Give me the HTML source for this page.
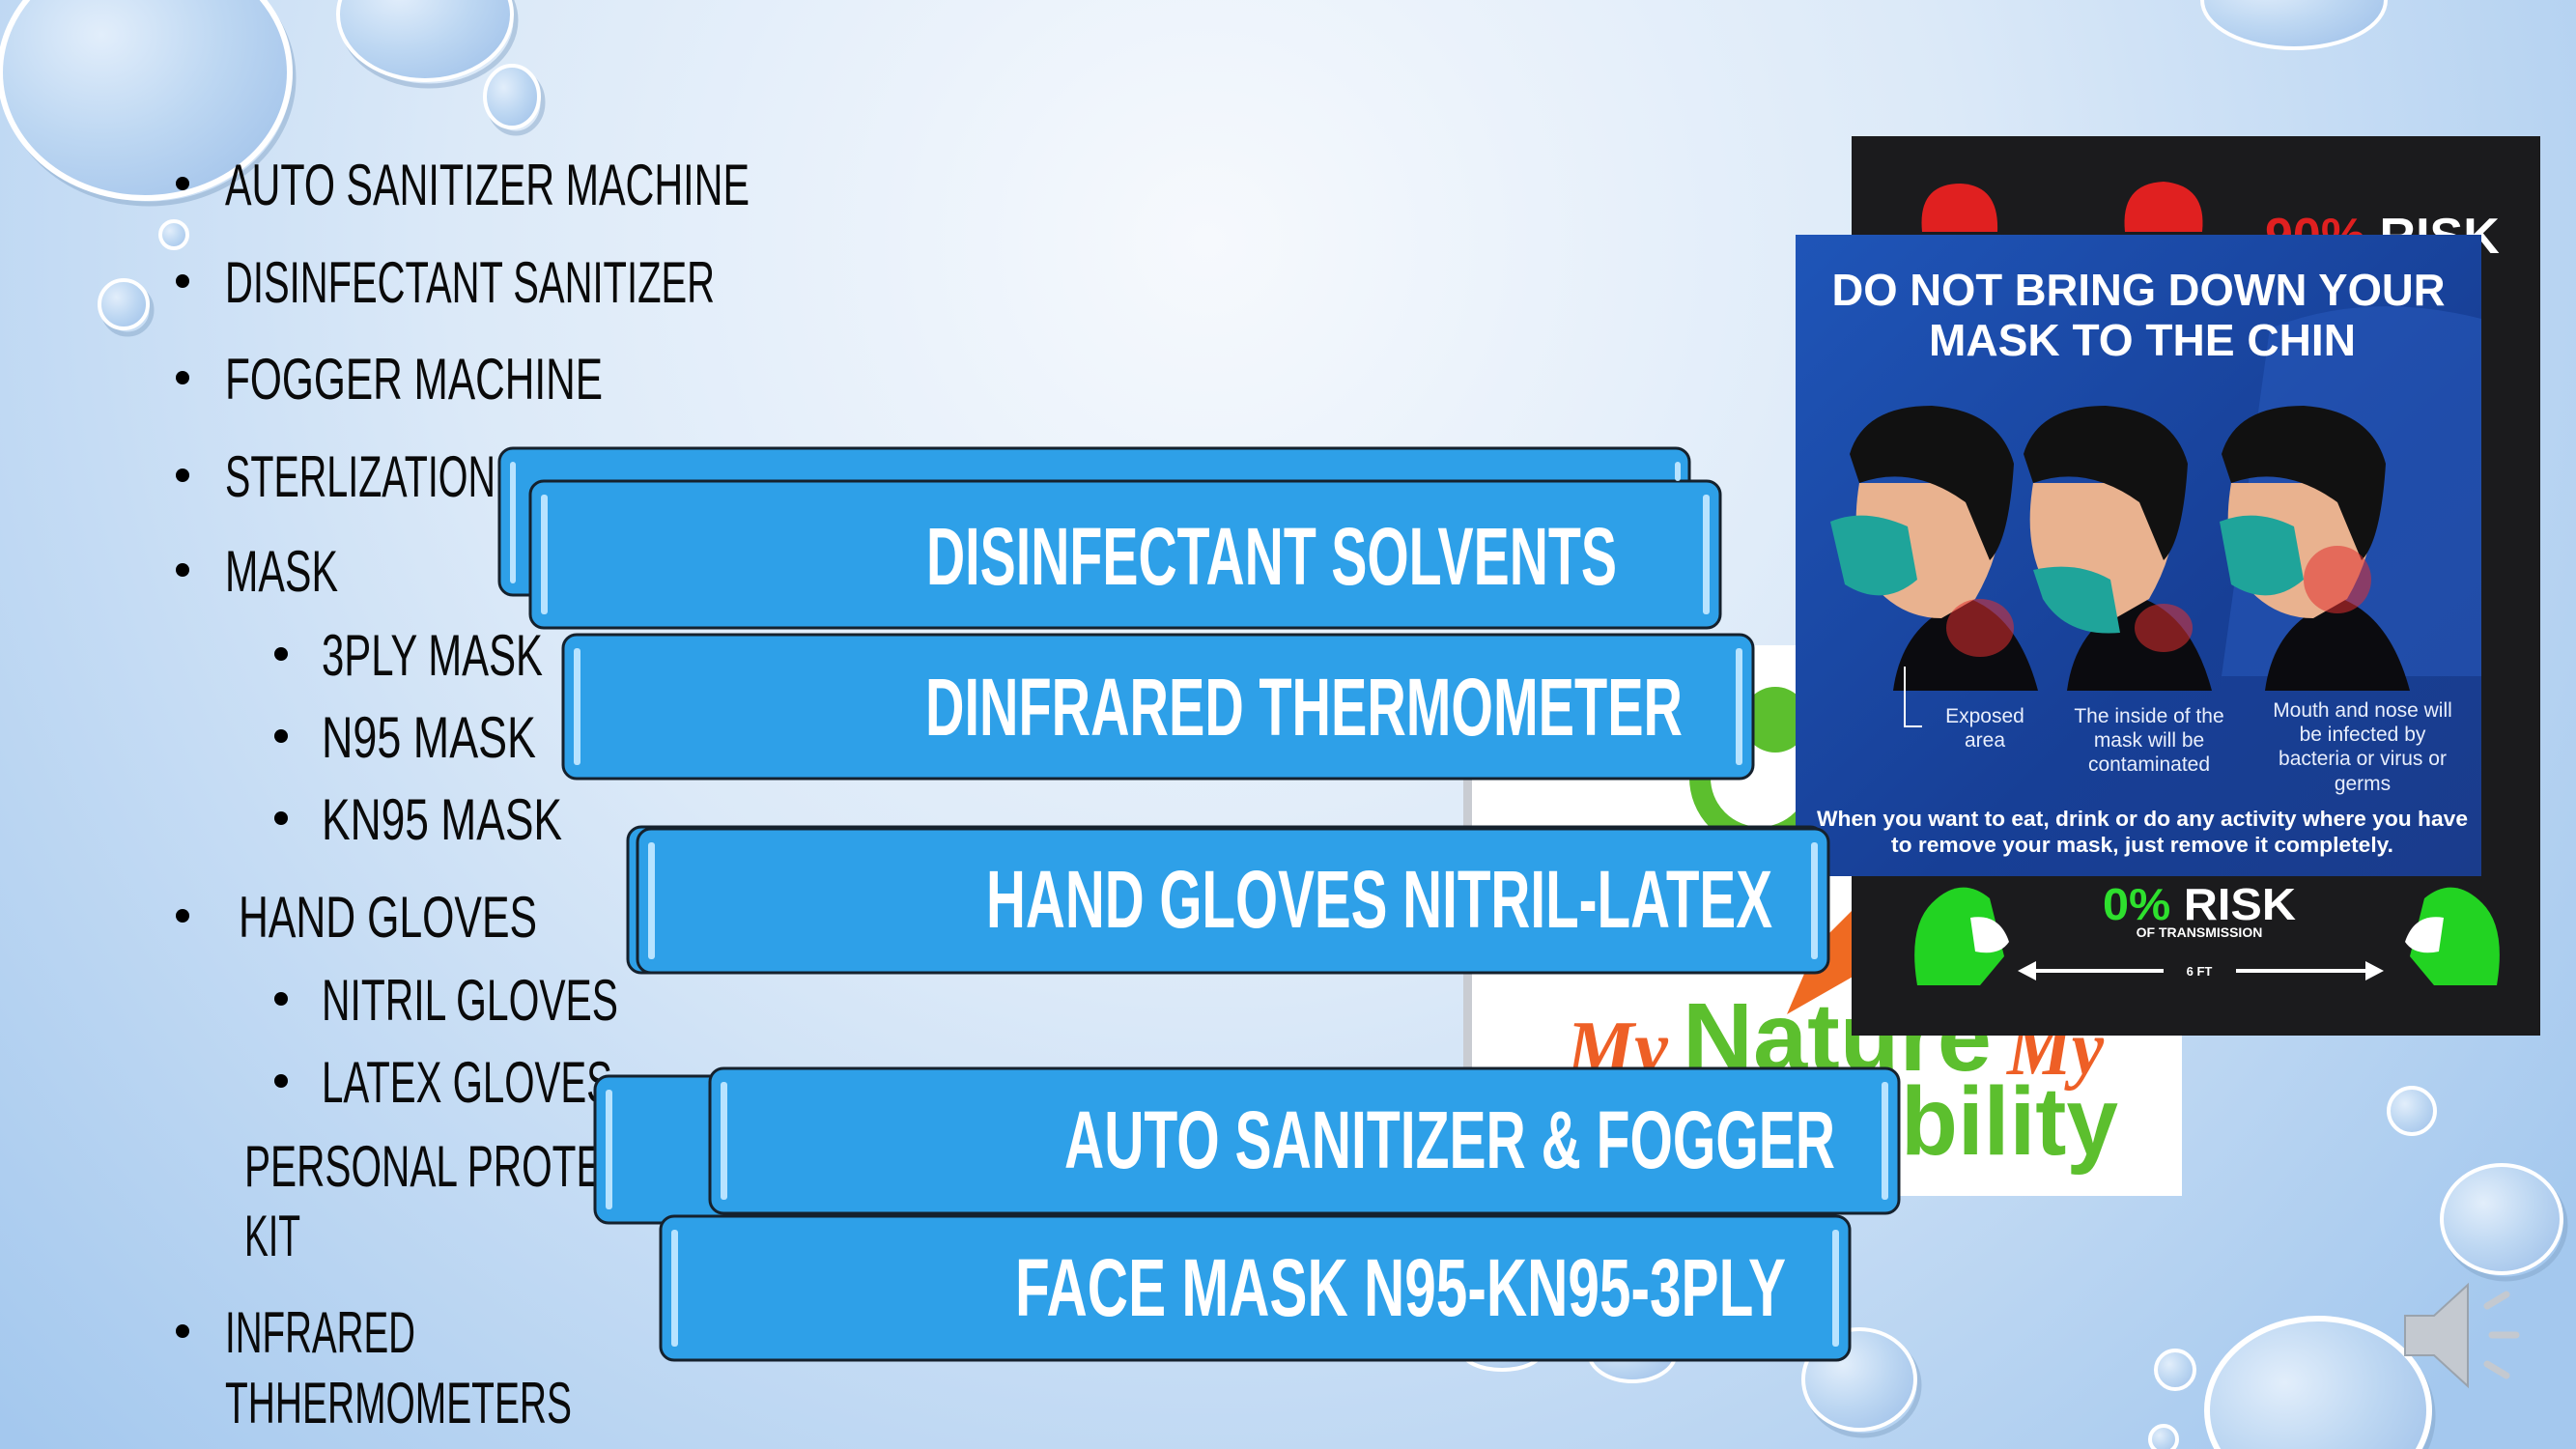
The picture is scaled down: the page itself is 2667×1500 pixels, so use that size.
<!DOCTYPE html>
<html><head><meta charset="utf-8"><style>
html,body{margin:0;padding:0;width:2667px;height:1500px;overflow:hidden}
svg{display:block}
.lt{font-family:"Liberation Sans",sans-serif;font-size:60px;fill:#0a0a0a}
.bt{font-family:"Liberation Sans",sans-serif;font-weight:bold;font-size:84px;fill:#fff}
.pt{font-family:"Liberation Sans",sans-serif;font-weight:bold;fill:#fff}
.cap{font-family:"Liberation Sans",sans-serif;font-size:21px;fill:#e8eefc;text-anchor:middle}
</style></head><body>
<svg width="2667" height="1500" viewBox="0 0 2667 1500" xmlns="http://www.w3.org/2000/svg">
<defs>
<radialGradient id="bg" cx="1250" cy="250" r="1750" gradientUnits="userSpaceOnUse">
<stop offset="0" stop-color="#f6f9fd"/><stop offset="0.45" stop-color="#dbe9f8"/><stop offset="1" stop-color="#a4c8ee"/>
</radialGradient>
<radialGradient id="drop" cx="0.35" cy="0.35" r="0.7">
<stop offset="0" stop-color="#e2eefb"/><stop offset="0.6" stop-color="#bdd7f2"/><stop offset="1" stop-color="#a9c8ec"/>
</radialGradient>
<linearGradient id="blue" x1="0" y1="0" x2="1" y2="1">
<stop offset="0" stop-color="#1f55b8"/><stop offset="0.6" stop-color="#173f96"/><stop offset="1" stop-color="#1a3c8c"/>
</linearGradient>
</defs>
<rect width="2667" height="1500" fill="url(#bg)"/>
<!-- droplet shadows -->
<g fill="none" stroke="#7f9fc4" stroke-width="5" opacity="0.45" transform="translate(4,6)">
<ellipse cx="150" cy="75" rx="150" ry="130"/>
<ellipse cx="440" cy="15" rx="90" ry="68"/>
<ellipse cx="530" cy="100" rx="28" ry="32"/>
<circle cx="128" cy="315" r="25"/>
<ellipse cx="2590" cy="1262" rx="62" ry="56"/>
<ellipse cx="2400" cy="1460" rx="115" ry="95"/>
<ellipse cx="1925" cy="1428" rx="58" ry="52"/>
</g>
<g stroke="#ffffff" stroke-width="4" fill="url(#drop)">
<ellipse cx="150" cy="75" rx="150" ry="130" stroke-width="6"/>
<ellipse cx="440" cy="15" rx="90" ry="68"/>
<ellipse cx="530" cy="100" rx="28" ry="32"/>
<circle cx="180" cy="243" r="14"/>
<circle cx="128" cy="315" r="25"/>
<ellipse cx="2375" cy="0" rx="95" ry="50"/>
<circle cx="2497" cy="1150" r="24"/>
<ellipse cx="2590" cy="1262" rx="62" ry="56"/>
<ellipse cx="2400" cy="1460" rx="115" ry="95" stroke-width="6"/>
<circle cx="2252" cy="1418" r="20"/>
<ellipse cx="1925" cy="1428" rx="58" ry="52"/>
<ellipse cx="1690" cy="1400" rx="45" ry="30"/>
<ellipse cx="1555" cy="1400" rx="40" ry="18"/>
<circle cx="2240" cy="1490" r="14"/>
</g>
<!-- left list -->
<g class="lt">
<circle cx="189" cy="190" r="7" fill="#000"/><text x="233" y="212" textLength="543" lengthAdjust="spacingAndGlyphs">AUTO SANITIZER MACHINE</text>
<circle cx="189" cy="291" r="7" fill="#000"/><text x="233" y="313" textLength="507" lengthAdjust="spacingAndGlyphs">DISINFECTANT SANITIZER</text>
<circle cx="189" cy="391" r="7" fill="#000"/><text x="233" y="413" textLength="391" lengthAdjust="spacingAndGlyphs">FOGGER MACHINE</text>
<circle cx="189" cy="492" r="7" fill="#000"/><text x="233" y="514" textLength="280" lengthAdjust="spacingAndGlyphs">STERLIZATION</text>
<circle cx="189" cy="590" r="7" fill="#000"/><text x="233" y="612" textLength="117" lengthAdjust="spacingAndGlyphs">MASK</text>
<circle cx="291" cy="677" r="7" fill="#000"/><text x="333" y="699" textLength="229" lengthAdjust="spacingAndGlyphs">3PLY MASK</text>
<circle cx="291" cy="762" r="7" fill="#000"/><text x="333" y="784" textLength="222" lengthAdjust="spacingAndGlyphs">N95 MASK</text>
<circle cx="291" cy="847" r="7" fill="#000"/><text x="333" y="869" textLength="249" lengthAdjust="spacingAndGlyphs">KN95 MASK</text>
<circle cx="189" cy="948" r="7" fill="#000"/><text x="247" y="970" textLength="309" lengthAdjust="spacingAndGlyphs">HAND GLOVES</text>
<circle cx="291" cy="1034" r="7" fill="#000"/><text x="333" y="1056" textLength="307" lengthAdjust="spacingAndGlyphs">NITRIL GLOVES</text>
<circle cx="291" cy="1119" r="7" fill="#000"/><text x="333" y="1141" textLength="301" lengthAdjust="spacingAndGlyphs">LATEX GLOVES</text>
<text x="253" y="1228" textLength="490" lengthAdjust="spacingAndGlyphs">PERSONAL PROTECTIVE</text>
<text x="253" y="1300" textLength="58" lengthAdjust="spacingAndGlyphs">KIT</text>
<circle cx="189" cy="1378" r="7" fill="#000"/><text x="233" y="1400" textLength="197" lengthAdjust="spacingAndGlyphs">INFRARED</text>
<text x="233" y="1473" textLength="359" lengthAdjust="spacingAndGlyphs">THHERMOMETERS</text>
</g>
<!-- nature box -->
<rect x="1515" y="668" width="14" height="570" fill="#c9ccd2"/>
<rect x="1524" y="668" width="735" height="570" fill="#ffffff"/>
<circle cx="1822" cy="805" r="62" fill="none" stroke="#5cbf2e" stroke-width="22"/>
<circle cx="1838" cy="745" r="34" fill="#5cbf2e"/>
<path d="M1880 980 L1930 930 L1920 1010 L1850 1050 Z" fill="#ef6a22"/>
<text x="1622" y="1112" font-family="Liberation Serif,serif" font-style="italic" font-weight="bold" font-size="80" fill="#ee5f26" textLength="105" lengthAdjust="spacingAndGlyphs">My</text>
<text x="1742" y="1108" font-family="Liberation Sans,sans-serif" font-weight="bold" font-size="100" fill="#5cbf2e" textLength="320" lengthAdjust="spacingAndGlyphs">Nature</text>
<text x="2078" y="1112" font-family="Liberation Serif,serif" font-style="italic" font-weight="bold" font-size="80" fill="#ee5f26" textLength="100" lengthAdjust="spacingAndGlyphs">My</text>
<text x="1968" y="1195" font-family="Liberation Sans,sans-serif" font-weight="bold" font-size="100" fill="#5cbf2e" textLength="225" lengthAdjust="spacingAndGlyphs">bility</text>
<!-- dark poster -->
<rect x="1917" y="141" width="713" height="931" fill="#1b1b1d"/>
<path d="M1990 240 Q1985 190 2030 190 Q2070 192 2068 240 Z" fill="#e02020"/>
<path d="M2200 240 Q2195 190 2240 188 Q2285 192 2280 240 Z" fill="#e02020"/>
<text x="2345" y="262" class="pt" font-size="52"><tspan fill="#e02020">90%</tspan> RISK</text>
<path d="M1985 1020 Q1975 960 2000 935 Q2030 905 2060 930 L2075 990 L2050 1020 Z" fill="#22d322"/>
<path d="M2040 950 Q2070 945 2080 975 Q2070 990 2045 985 Z" fill="#fff"/>
<path d="M2585 1020 Q2595 960 2570 935 Q2540 905 2510 930 L2495 990 L2520 1020 Z" fill="#22d322"/>
<path d="M2530 950 Q2500 945 2490 975 Q2500 990 2525 985 Z" fill="#fff"/>
<text x="2177" y="952" class="pt" font-size="46" textLength="200" lengthAdjust="spacingAndGlyphs"><tspan fill="#2ee02e">0%</tspan> RISK</text>
<text x="2277" y="970" class="pt" font-size="14" text-anchor="middle">OF TRANSMISSION</text>
<path d="M2095 1005 L2240 1005 M2315 1005 L2460 1005" stroke="#fff" stroke-width="4"/>
<path d="M2089 1005 L2108 995 L2108 1015 Z M2468 1005 L2449 995 L2449 1015 Z" fill="#fff"/>
<text x="2277" y="1010" class="pt" font-size="13" text-anchor="middle">6 FT</text>
<!-- blue poster -->
<rect x="1859" y="243" width="710" height="664" fill="url(#blue)"/>
<path d="M2350 340 Q2450 300 2569 330 L2569 700 L2300 700 Z" fill="#2a5cc0" opacity="0.5"/>
<text x="2214" y="316" class="pt" font-size="46" text-anchor="middle" textLength="635" lengthAdjust="spacingAndGlyphs">DO NOT BRING DOWN YOUR</text>
<text x="2218" y="368" class="pt" font-size="46" text-anchor="middle" textLength="442" lengthAdjust="spacingAndGlyphs">MASK TO THE CHIN</text>
<g id="head">
<path d="M1960 715 Q1970 640 2040 620 Q2090 640 2110 715 Z" fill="#0b0b0f"/>
<path d="M1925 500 Q1915 560 1935 600 Q1965 640 2010 640 L2045 620 Q2080 560 2070 500 Z" fill="#e9b28f"/>
<path d="M1915 470 Q1930 420 2000 420 Q2070 425 2085 480 Q2080 560 2060 580 L2035 520 Q1980 480 1925 500 Z" fill="#111"/>
</g>
<path d="M1895 540 Q1930 525 1975 545 L1985 600 Q1950 630 1910 605 Z" fill="#1fa49a"/>
<use href="#head" x="180"/>
<path d="M2105 590 Q2150 580 2185 600 L2195 655 Q2140 660 2115 620 Z" fill="#1fa49a"/>
<use href="#head" x="385"/>
<path d="M2298 540 Q2335 525 2375 545 L2385 600 Q2350 630 2310 605 Z" fill="#1fa49a"/>
<ellipse cx="2050" cy="650" rx="35" ry="30" fill="#e03030" opacity="0.55"/>
<ellipse cx="2240" cy="650" rx="30" ry="25" fill="#e03030" opacity="0.55"/>
<ellipse cx="2420" cy="600" rx="35" ry="35" fill="#e03030" opacity="0.55"/>
<path d="M1972 690 L1972 752 L1990 752" stroke="#fff" stroke-width="2" fill="none"/>
<text class="cap"><tspan x="2055" y="748">Exposed</tspan><tspan x="2055" y="773">area</tspan></text>
<text class="cap"><tspan x="2225" y="748">The inside of the</tspan><tspan x="2225" y="773">mask will be</tspan><tspan x="2225" y="798">contaminated</tspan></text>
<text class="cap"><tspan x="2446" y="742">Mouth and nose will</tspan><tspan x="2446" y="767">be infected by</tspan><tspan x="2446" y="792">bacteria or virus or</tspan><tspan x="2446" y="818">germs</tspan></text>
<text x="2218" y="855" class="pt" font-size="22" text-anchor="middle" textLength="674" lengthAdjust="spacingAndGlyphs">When you want to eat, drink or do any activity where you have</text>
<text x="2218" y="882" class="pt" font-size="22" text-anchor="middle" textLength="520" lengthAdjust="spacingAndGlyphs">to remove your mask, just remove it completely.</text>
<!-- banners -->
<g stroke="#15212d" stroke-width="3">
<rect x="517" y="464" width="1232" height="152" rx="14" fill="#2ea0e8"/>
<rect x="549" y="498" width="1232" height="152" rx="14" fill="#2ea0e8"/>
<rect x="583" y="657" width="1232" height="149" rx="14" fill="#2ea0e8"/>
<rect x="650" y="856" width="1238" height="151" rx="14" fill="#2ea0e8"/>
<rect x="660" y="858" width="1233" height="149" rx="14" fill="#2ea0e8"/>
<rect x="616" y="1114" width="1240" height="152" rx="14" fill="#2ea0e8"/>
<rect x="735" y="1106" width="1231" height="150" rx="14" fill="#2ea0e8"/>
<rect x="684" y="1259" width="1231" height="149" rx="14" fill="#2ea0e8"/>
</g>
<g fill="#b8e3ff">
<rect x="528" y="478" width="6" height="126" rx="3"/><rect x="1734" y="478" width="6" height="20" rx="3"/>
<rect x="560" y="512" width="7" height="124" rx="3"/><rect x="1763" y="512" width="7" height="124" rx="3"/>
<rect x="594" y="671" width="7" height="121" rx="3"/><rect x="1797" y="671" width="7" height="121" rx="3"/>
<rect x="671" y="872" width="7" height="121" rx="3"/><rect x="1875" y="872" width="7" height="121" rx="3"/>
<rect x="627" y="1128" width="7" height="124" rx="3"/>
<rect x="746" y="1120" width="7" height="122" rx="3"/><rect x="1948" y="1120" width="7" height="122" rx="3"/>
<rect x="695" y="1273" width="7" height="121" rx="3"/><rect x="1897" y="1273" width="7" height="121" rx="3"/>
</g>
<g class="bt">
<text x="959" y="605" textLength="715" lengthAdjust="spacingAndGlyphs">DISINFECTANT SOLVENTS</text>
<text x="958" y="761" textLength="784" lengthAdjust="spacingAndGlyphs">DINFRARED THERMOMETER</text>
<text x="1021" y="960" textLength="814" lengthAdjust="spacingAndGlyphs">HAND GLOVES NITRIL-LATEX</text>
<text x="1102" y="1209" textLength="798" lengthAdjust="spacingAndGlyphs">AUTO SANITIZER &amp; FOGGER</text>
<text x="1051" y="1362" textLength="798" lengthAdjust="spacingAndGlyphs">FACE MASK N95-KN95-3PLY</text>
</g>
<!-- speaker -->
<g fill="#c4c9d0" stroke="#9aa3ad" stroke-width="2">
<path d="M2490 1362 L2520 1362 L2555 1330 L2555 1435 L2520 1403 L2490 1403 Z"/>
</g>
<g stroke="#c4c9d0" stroke-width="7" stroke-linecap="round" fill="none">
<path d="M2575 1352 L2595 1340 M2580 1382 L2605 1382 M2575 1412 L2595 1424"/>
</g>
</svg>
</body></html>
